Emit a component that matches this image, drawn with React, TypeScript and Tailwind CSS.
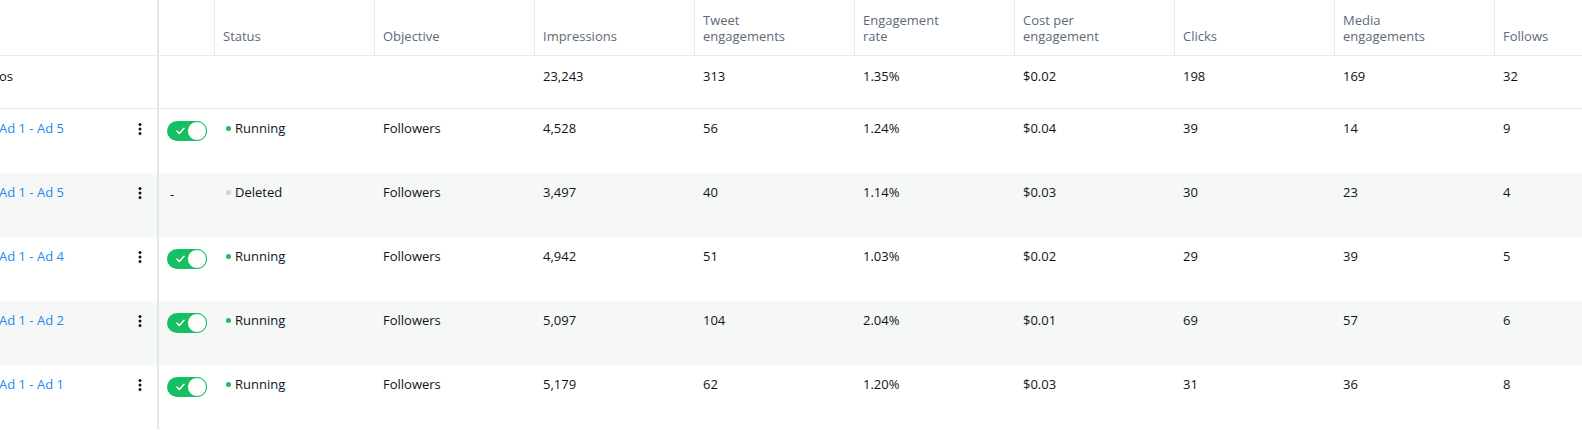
import React from "react";

type Row = {
  name: string;
  on: boolean;
  status: "Running" | "Deleted";
  values: string[];
};

const columns = [
  ["Status"],
  ["Objective"],
  ["Impressions"],
  ["Tweet", "engagements"],
  ["Engagement", "rate"],
  ["Cost per", "engagement"],
  ["Clicks"],
  ["Media", "engagements"],
  ["Follows"],
];

const totals = ["23,243", "313", "1.35%", "$0.02", "198", "169", "32"];

const rows: Row[] = [
  { name: "Ad 1 - Ad 5", on: true, status: "Running", values: ["4,528", "56", "1.24%", "$0.04", "39", "14", "9"] },
  { name: "Ad 1 - Ad 5", on: false, status: "Deleted", values: ["3,497", "40", "1.14%", "$0.03", "30", "23", "4"] },
  { name: "Ad 1 - Ad 4", on: true, status: "Running", values: ["4,942", "51", "1.03%", "$0.02", "29", "39", "5"] },
  { name: "Ad 1 - Ad 2", on: true, status: "Running", values: ["5,097", "104", "2.04%", "$0.01", "69", "57", "6"] },
  { name: "Ad 1 - Ad 1", on: true, status: "Running", values: ["5,179", "62", "1.20%", "$0.03", "31", "36", "8"] },
];

const Toggle = () => (
  <div className="relative flex h-[20px] w-[40px] items-center rounded-full bg-[#17bf63]">
    <svg className="ml-[9px]" width="9" height="8" viewBox="0 0 9 8" fill="none">
      <path d="M1 4.2 3.4 6.5 8 1.3" stroke="white" strokeWidth="1.6" strokeLinecap="round" strokeLinejoin="round" />
    </svg>
    <span className="absolute right-0 top-0 size-[20px] rounded-full border border-[#17bf63] bg-white" />
  </div>
);

const Kebab = () => (
  <svg width="4" height="12" viewBox="0 0 4 12" className="text-[#0f1419]">
    <circle cx="2" cy="1.6" r="1.5" fill="currentColor" />
    <circle cx="2" cy="6" r="1.5" fill="currentColor" />
    <circle cx="2" cy="10.4" r="1.5" fill="currentColor" />
  </svg>
);

const Cell = ({ children }: { children?: React.ReactNode }) => (
  <div className="w-[160px] shrink-0 pl-[9px] pt-[10px]">{children}</div>
);

export default function App() {
  return (
    <div
      className="h-[430px] w-[1582px] overflow-hidden bg-white text-[13px] leading-[18px] text-[#0f1419]"
      style={{ fontFamily: '"Open Sans", "Liberation Sans", sans-serif' }}
    >
      {/* Header */}
      <div className="flex h-[56px] border-b border-[#e6ecf0]">
        <div className="w-[159px] shrink-0 border-r-2 border-[#e1e8ed]" />
        <div className="w-[55px] shrink-0" />
        {columns.map((lines, i) => (
          <div
            key={i}
            className="flex w-[160px] shrink-0 flex-col justify-end border-l border-[#e6ecf0] pb-[11px] pl-[8px] leading-[16px] text-[#5b6b7a]"
          >
            {lines.map((l) => (
              <span key={l}>{l}</span>
            ))}
          </div>
        ))}
      </div>

      {/* Totals */}
      <div className="flex h-[53px] border-b border-[#e6ecf0]">
        <div className="w-[159px] shrink-0 border-r-2 border-[#e1e8ed] pt-[11px]">
          <span className="-ml-[1px]">os</span>
        </div>
        <div className="w-[55px] shrink-0" />
        <Cell />
        <Cell />
        {totals.map((v, i) => (
          <div key={i} className="w-[160px] shrink-0 pl-[9px] pt-[11px]">
            {v}
          </div>
        ))}
      </div>

      {/* Rows */}
      {rows.map((r, i) => (
        <div key={i} className={`flex h-[64px] ${i % 2 === 1 ? "bg-[#f5f8f7]" : "bg-white"}`}>
          <div className="flex w-[159px] shrink-0 items-start justify-between border-r-2 border-[#e1e8ed] pr-[15px] pt-[10px]">
            <a className="-ml-[1px] text-[#1d8cf0]">{r.name}</a>
            <div className="pt-[4px]">
              <Kebab />
            </div>
          </div>
          <div className="w-[55px] shrink-0 pl-[8px] pt-[12px]">
            {r.on ? <Toggle /> : <span className="ml-[3px] leading-[16px]">-</span>}
          </div>
          <Cell>
            <div className="flex items-center">
              <span
                className={`ml-[3px] mr-[4px] size-[5px] rounded-full ${
                  r.status === "Running" ? "bg-[#17bf63]" : "bg-[#ccd6dd]"
                }`}
              />
              {r.status}
            </div>
          </Cell>
          <Cell>Followers</Cell>
          {r.values.map((v, j) => (
            <Cell key={j}>{v}</Cell>
          ))}
        </div>
      ))}
    </div>
  );
}
